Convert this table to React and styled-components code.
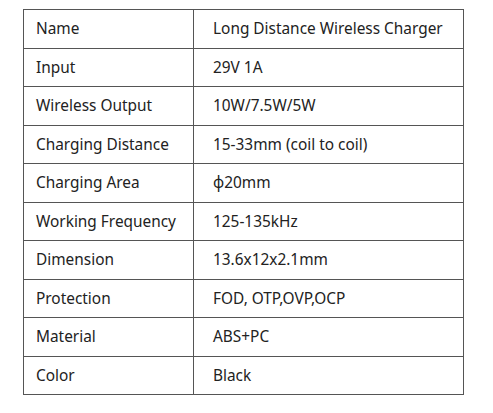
import styled, { createGlobalStyle } from 'styled-components';

const GlobalStyle = createGlobalStyle`
  body {
    margin: 0;
    background: #fff;
    font-family: "Noto Sans", "Open Sans", sans-serif;
  }
`;

const Page = styled.div`
  padding: 9px 0 0 23px;
`;

const SpecTable = styled.table`
  border-collapse: collapse;
  width: 440px;
  table-layout: fixed;
  color: #222;
  font-size: 15.4px;
`;

const Col = styled.col`
  width: ${(p) => p.$w};
`;

const Row = styled.tr`
  height: 38.5px;
`;

const Cell = styled.td`
  border: 1.5px solid #555;
  padding: 0 0 0 ${(p) => (p.$value ? '19px' : '12px')};
  white-space: nowrap;
  vertical-align: middle;
`;

const specs = [
  ['Name', 'Long Distance Wireless Charger'],
  ['Input', '29V 1A'],
  ['Wireless Output', '10W/7.5W/5W'],
  ['Charging Distance', '15-33mm (coil to coil)'],
  ['Charging Area', 'ϕ20mm'],
  ['Working Frequency', '125-135kHz'],
  ['Dimension', '13.6x12x2.1mm'],
  ['Protection', 'FOD, OTP,OVP,OCP'],
  ['Material', 'ABS+PC'],
  ['Color', 'Black'],
];

export default function App() {
  return (
    <>
      <GlobalStyle />
      <Page>
        <SpecTable>
          <colgroup>
            <Col $w="170px" />
            <Col $w="270px" />
          </colgroup>
          <tbody>
            {specs.map(([label, value]) => (
              <Row key={label}>
                <Cell>{label}</Cell>
                <Cell $value>{value}</Cell>
              </Row>
            ))}
          </tbody>
        </SpecTable>
      </Page>
    </>
  );
}
